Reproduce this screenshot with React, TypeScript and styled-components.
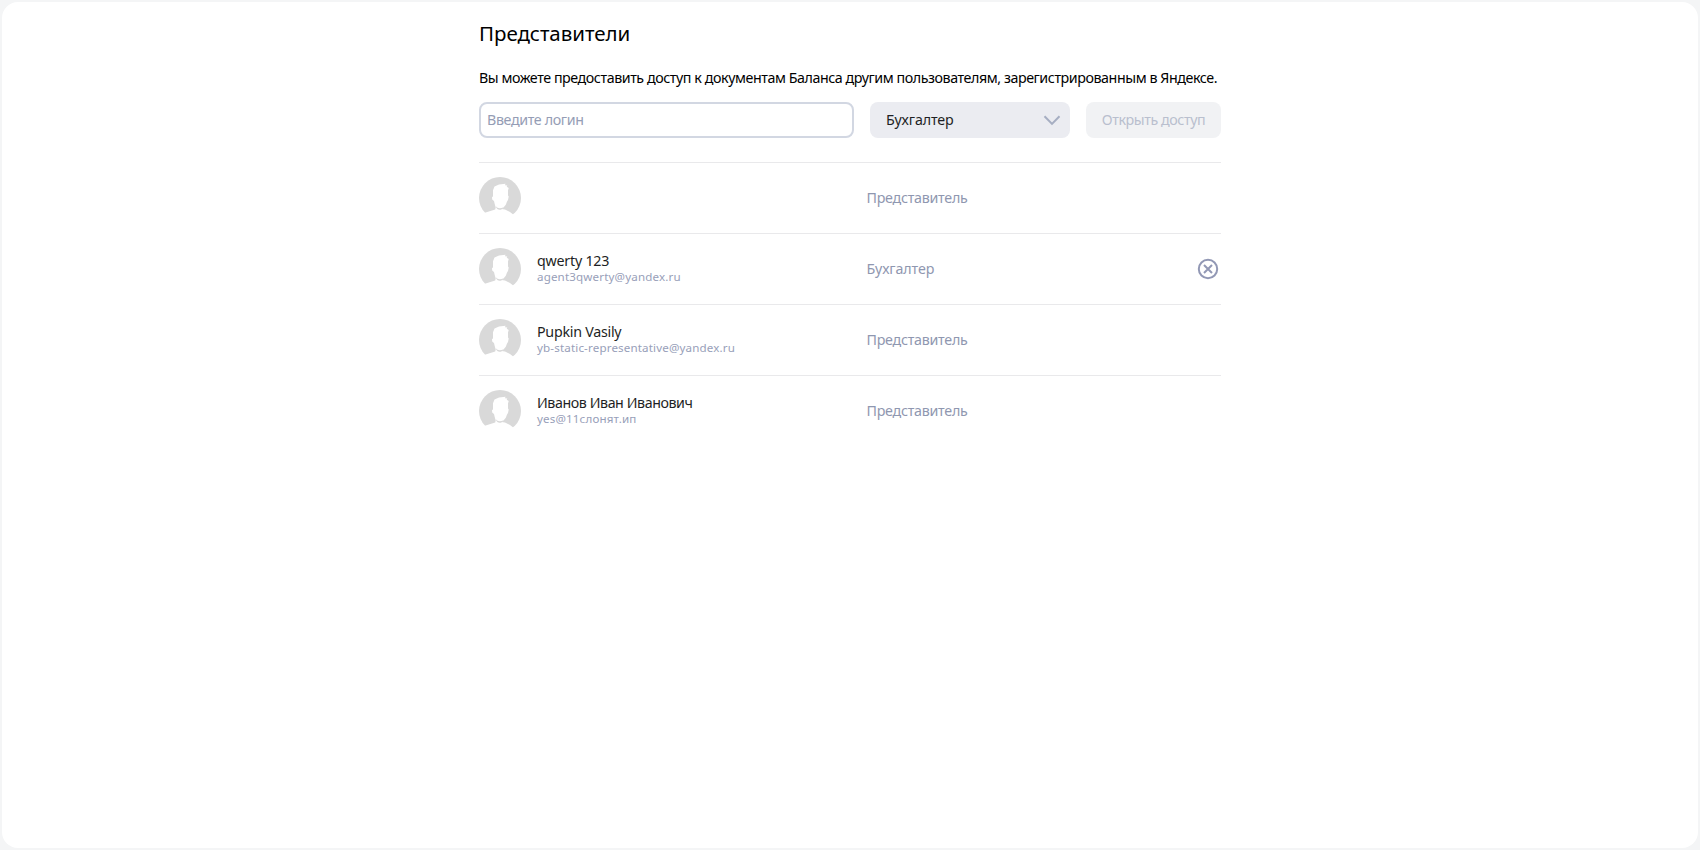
import React from "react";
import styled, { createGlobalStyle } from "styled-components";

const GlobalStyle = createGlobalStyle`
  *, *::before, *::after { box-sizing: border-box; }
  body {
    margin: 0;
    background: #f4f5f6;
    font-family: "Noto Sans", "Open Sans", sans-serif;
    font-size: 14.25px;
    color: #1e1f24;
  }
  button, input { font: inherit; }
`;

const Page = styled.div`
  height: 100vh;
  padding: 2px;
`;

const Card = styled.main`
  height: 100%;
  border-radius: 16px;
  background: #fff;
  padding-top: 17px;
`;

const Content = styled.section`
  width: 742px;
  margin: 0 auto;
`;

const Title = styled.h1`
  margin: 0 0 21px;
  font-size: 20.5px;
  font-weight: 400;
  line-height: 28px;
  letter-spacing: -0.05px;
  color: #000;
`;

const Description = styled.p`
  margin: 0 0 14px;
  line-height: 20px;
  letter-spacing: -0.43px;
  white-space: nowrap;
  color: #000;
`;

const Form = styled.form`
  display: grid;
  grid-template-columns: 375px 200px 135px;
  column-gap: 16px;
  height: 36px;
  margin-bottom: 24px;
`;

const LoginInput = styled.input`
  width: 100%;
  padding: 0 6px 2px;
  border: 2px solid #d2d7e2;
  border-radius: 8px;
  background: #fff;
  letter-spacing: -0.36px;
  outline: none;

  &::placeholder {
    color: #959db5;
    opacity: 1;
  }
`;

const RoleSelect = styled.button`
  display: flex;
  align-items: center;
  justify-content: space-between;
  padding: 0 9px 0 16px;
  border: 0;
  border-radius: 8px;
  background: #ebecf1;
  color: #1e1f24;
  letter-spacing: -0.12px;
`;

const SelectedRole = styled.span`
  padding-bottom: 2px;
`;

const SubmitButton = styled.button`
  padding: 0 0 2px;
  border: 0;
  border-radius: 8px;
  background: #f1f2f4;
  color: #b9bfce;
  letter-spacing: -0.41px;
`;

const List = styled.ul`
  margin: 0;
  padding: 0;
  list-style: none;
`;

const Row = styled.li`
  display: grid;
  grid-template-columns: 42px 313.5px 1fr 26px;
  column-gap: 16px;
  align-items: center;
  height: 71px;
  border-top: 1px solid #e9e9eb;
`;

const Person = styled.div`
  padding-bottom: 2px;
  white-space: nowrap;
`;

const Name = styled.div<{ $tracking: number }>`
  line-height: 18px;
  letter-spacing: ${(p) => p.$tracking}px;
`;

const Email = styled.div`
  font-size: 11.6px;
  line-height: 14px;
  letter-spacing: 0.15px;
  color: #98a0b9;
`;

const Role = styled.div<{ $tracking: number }>`
  padding-bottom: 2px;
  letter-spacing: ${(p) => p.$tracking}px;
  color: #8f97b0;
`;

const RemoveButton = styled.button`
  display: flex;
  justify-content: center;
  padding: 0;
  border: 0;
  background: none;
`;

const Chevron = () => (
  <svg width="18" height="12" viewBox="0 0 18 12" fill="none">
    <path d="M1.5 2.300 9 9.900l7.500-7.600" stroke="#a6aec2" strokeWidth="2" />
  </svg>
);

const Avatar = () => (
  <svg width="42" height="42" viewBox="0 0 42 42">
    <circle cx="21" cy="21" r="21" fill="#d9d9d9" />
    <path
      fill="#fff"
      d="M14 20V13.200L15.500 9.500 20 7.600 26.500 6.800 26 8.200 28.300 8.400 27.700 9.800 29.700 11 29 13.500V18.500L29.700 19.500 29 23 28 24.500 26.800 27.800 24.500 30.500 22.500 32 26 32.600 31 35 34.500 37.800V43H5V36L16.200 32.500 16.700 30.500 15.700 27 15 24 13.200 22.500 13 19.500Z"
    />
    <path d="M16.700 29.300C18.800 31.500 21 31.700 24.700 30.200 22.500 33.800 18 33.800 16.700 29.300Z" fill="#d9d9d9" />
  </svg>
);

const RemoveIcon = () => (
  <svg width="22" height="22" viewBox="0 0 22 22" fill="none" stroke="#9298b5" strokeWidth="2">
    <circle cx="11" cy="11" r="9.200" />
    <path d="m7 7 8 8M15 7l-8 8" />
  </svg>
);

interface Member {
  name?: string;
  email?: string;
  role: "Представитель" | "Бухгалтер";
  tracking?: number;
  removable?: boolean;
}

const members: Member[] = [
  { role: "Представитель" },
  { name: "qwerty 123", email: "agent3qwerty@yandex.ru", role: "Бухгалтер", tracking: -0.23, removable: true },
  { name: "Pupkin Vasily", email: "yb-static-representative@yandex.ru", role: "Представитель", tracking: -0.26 },
  { name: "Иванов Иван Иванович", email: "yes@11слонят.ип", role: "Представитель", tracking: -0.43 },
];

export default function App() {
  return (
    <Page>
      <GlobalStyle />
      <Card>
        <Content>
          <Title>Представители</Title>
          <Description>
            Вы можете предоставить доступ к документам Баланса другим пользователям, зарегистрированным в Яндексе.
          </Description>
          <Form>
            <LoginInput placeholder="Введите логин" />
            <RoleSelect type="button">
              <SelectedRole>Бухгалтер</SelectedRole>
              <Chevron />
            </RoleSelect>
            <SubmitButton type="submit" disabled>
              Открыть доступ
            </SubmitButton>
          </Form>
          <List>
            {members.map((m, i) => (
              <Row key={i}>
                <Avatar />
                <Person>
                  {m.name && <Name $tracking={m.tracking ?? 0}>{m.name}</Name>}
                  {m.email && <Email>{m.email}</Email>}
                </Person>
                <Role $tracking={m.role === "Бухгалтер" ? -0.1 : -0.26}>{m.role}</Role>
                {m.removable && (
                  <RemoveButton type="button" aria-label="Удалить">
                    <RemoveIcon />
                  </RemoveButton>
                )}
              </Row>
            ))}
          </List>
        </Content>
      </Card>
    </Page>
  );
}
